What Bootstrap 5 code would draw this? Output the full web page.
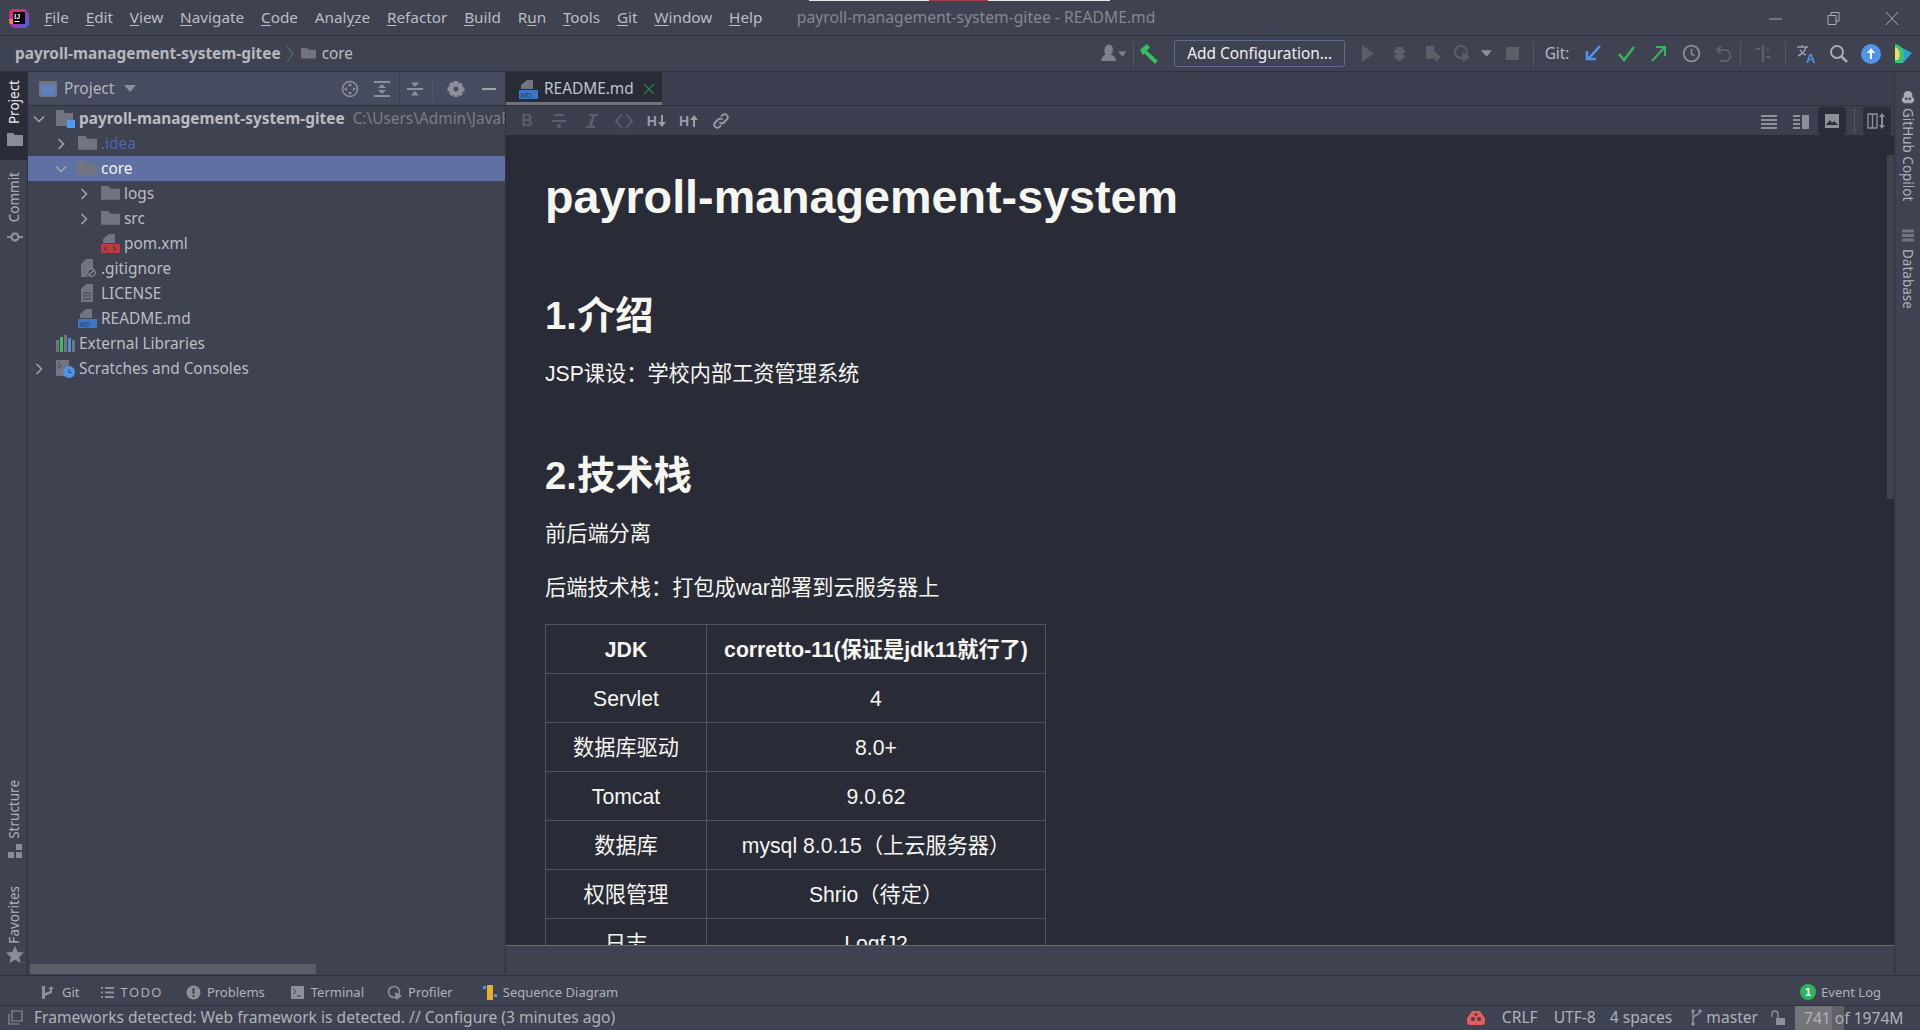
<!DOCTYPE html>
<html lang="en">
<head>
  <meta charset="UTF-8" />
  <title>payroll-management-system-gitee - README.md</title>
  <link href="https://cdn.jsdelivr.net/npm/bootstrap@5.3.2/dist/css/bootstrap.min.css" rel="stylesheet" />
  <style>
    html, body { height: 100%; }
    body {
      background-color: #3f4251;
      color: #bbbdc3;
      font-family: "Noto Sans", "Noto Sans CJK SC", sans-serif;
      font-size: 15.4px;
      line-height: 1;
      overflow: hidden;
    }
    .ide { height: 1030px; width: 1920px; position: relative; }
    .top-strip { position: absolute; left: 809px; top: 0; width: 301px; height: 1px; background: #e8e8e8; }
    .top-strip i { position: absolute; left: 120px; width: 59px; height: 1px; background: #a03c48; }

    .title-bar { height: 36px; border-bottom: 1px solid #2f313c; padding-left: 9px; }
    .app-logo { width: 20px; height: 20px; margin-right: 7px; }
    .menu-entry { padding: 0 8.400px; color: #bbbdc3; white-space: nowrap; font-size: 15.3px; }
    .menu-entry u { text-underline-offset: 2px; }
    .win-title { margin-left: 26px; color: #85888f; font-size: 15.7px; }
    .win-btn { width: 16px; height: 16px; }
    .win-btns { margin-left: auto; gap: 42px; padding-right: 20px; }

    .nav-bar { height: 36px; border-bottom: 1px solid #2f313c; padding-left: 15px; }
    .crumb-root { font-weight: 700; color: #b6b8bd; }
    .crumb-sep { width: 8px; height: 16px; margin: 0 6px 0 5px; }
    .crumb-dir { width: 17px; height: 15px; margin-right: 5px; }
    .tool-wrap { margin-left: auto; }
    .tool-box { width: 32.5px; height: 24px; display: flex; align-items: center; justify-content: center; flex: none; }
    .tool-box svg { width: 19px; height: 19px; }
    .tool-sep { width: 1px; height: 24px; background: #545764; flex: none; }
    .config-btn {
      width: 171px; height: 27px; margin: 0 13px 0 8px; flex: none;
      border: 1px solid #5f6a96; border-radius: 3px; background: #3f4251;
      color: #f0f0f0; text-align: center; line-height: 26px; white-space: nowrap;
    }
    .git-label { color: #b6b8bd; padding: 0 8px 0 11px; }

    .main-area { height: 904px; border-bottom: 1px solid #2f313c; }
    .side-left { width: 28px; border-right: 1px solid #2f313c; flex: none; }
    .side-right { width: 26px; border-left: 1px solid #2f313c; flex: none; padding-top: 18px; }
    .side-item { display: flex; flex-direction: column; align-items: center; font-size: 13.5px; color: #b0b2b9; }
    .side-left .side-item { padding-left: 2px; }
    .side-item.on { height: 88px; background: #2a2c37; color: #eee; padding-top: 8px; }
    .v-up { writing-mode: vertical-rl; transform: rotate(180deg); white-space: nowrap; }
    .v-down { writing-mode: vertical-rl; white-space: nowrap; }
    .side-item svg { width: 16px; height: 14px; flex: none; }
    .side-item .struct-ic { margin-top: 6px; }
    .side-item .fav-ic { width: 18px; height: 17px; margin-top: 2px; }

    .proj-panel { width: 478px; flex: none; border-right: 1px solid #2f313c; position: relative; }
    .proj-head { height: 34px; background: #474b60; border-bottom: 1px solid #2f313c; padding-left: 11px; }
    .proj-head .head-ic { width: 18px; height: 16px; }
    .proj-title { color: #b4b6bd; margin-left: 7px; }
    .drop-arrow { width: 12px; height: 7px; margin-left: 10px; }
    .head-tools { margin-left: auto; }
    .head-tool { width: 32.5px; height: 33px; display: flex; align-items: center; justify-content: center; }
    .head-tool svg { width: 18px; height: 18px; }
    .head-line { border-left: 1px solid #3c3f50; }
    .head-sep { width: 1px; height: 24px; background: #555869; margin: 0 7px 0 1px; }

    .tree-row { height: 25px; display: flex; align-items: center; white-space: nowrap; overflow: hidden; }
    .tree-row.sel { background: #5f71a3; color: #f2f2f2; }
    .d0 { padding-left: 2px; }
    .d1 { padding-left: 24px; }
    .d2 { padding-left: 47px; }
    .chev { width: 26px; flex: none; display: flex; padding-left: 3px; }
    .chev svg { width: 12px; height: 12px; }
    .row-ic { width: 19px; height: 19px; margin-right: 4px; flex: none; }
    .tree-row .bold { font-weight: 700; color: #bbbdc3; }
    .tree-row .path { color: #7b7e88; margin-left: 8px; }
    .tree-row .ign { color: #4f68a8; }
    .h-scroll { position: absolute; left: 2px; bottom: 1px; width: 286px; height: 10px; background: #5c5f69; }

    .editor-col { min-width: 0; }
    .tab-bar { height: 34px; border-bottom: 1px solid #2f313c; background: #3c3f4f; }
    .file-tab { width: 156px; height: 33px; background: #292b37; border-bottom: 3px solid #70737c; padding: 4px 0 0 13px; color: #bfc6cf; }
    .file-tab svg.md-ic { width: 19px; height: 19px; margin-right: 6px; }
    .file-tab svg.x-ic { width: 10px; height: 10px; margin-left: 10px; }
    .md-tools { height: 30px; background: #3c3f4f; padding: 0 3px 0 5px; }
    .md-btn { width: 32.3px; height: 28px; display: flex; align-items: center; justify-content: center; flex: none; }
    .md-btn svg { width: 18px; height: 18px; }
    .md-btn b { font-family: "Liberation Sans", sans-serif; font-size: 14px; color: #9a9da6; }
    .md-btn svg.h-arrow { width: 8px; height: 12px; margin-left: 1px; }
    .md-btn.act { background: #2b2d38; border-radius: 4px; width: 28px; }
    .md-right { margin-left: auto; }

    .md-pane {
      background: #292b37; color: #f6f6f0; overflow: hidden; position: relative;
      padding: 0 0 0 39px;
      font-family: "Liberation Sans", "Noto Sans CJK SC", sans-serif;
      font-size: 21.2px; line-height: 33px;
    }
    .md-pane h1 { font-size: 46.7px; font-weight: 700; line-height: 56px; margin: 34px 0 0; }
    .md-pane h2 { font-size: 38.3px; font-weight: 700; line-height: 46px; margin: 0; }
    .md-pane p { margin: 0 0 21px; }
    .h-intro { padding-top: 68px; padding-bottom: 18px; }
    .h-stack { padding-top: 42px; padding-bottom: 18px; }
    .md-tbl { border-collapse: collapse; width: 501px; margin-top: -1px; table-layout: fixed; }
    .md-tbl th, .md-tbl td { border: 1px solid #50525f; text-align: center; height: 49px; padding: 0; white-space: nowrap; }
    .md-tbl th:first-child, .md-tbl td:first-child { width: 161px; }
    .v-scroll { position: absolute; right: 0; top: 20px; width: 7px; height: 344px; background: #3f4251; }
    .editor-foot { height: 30px; border-top: 1px solid #66688c; flex: none; }

    .tool-win { height: 30px; border-bottom: 1px solid #2f313c; font-size: 13px; color: #b0b2b9; padding: 3px 39px 0 41px; }
    .tw-item { display: flex; align-items: center; white-space: nowrap; }
    .tw-item svg { width: 15px; height: 15px; margin-right: 6px; flex: none; }
    .tw-caps { letter-spacing: 1.4px; }
    .status-bar { height: 24px; font-size: 15.6px; color: #b0b2b9; padding: 0 0 1px 8px; }
    .status-bar .st-ic { width: 15px; height: 15px; flex: none; }
    .status-msg { margin-left: 11px; white-space: nowrap; }
    .st-right { margin-left: auto; }
    .mem-box { width: 125px; height: 24px; line-height: 24px; padding-left: 9px; white-space: nowrap; margin-bottom: -1px; background: linear-gradient(90deg, #747578 0, #747578 37px, #5f6068 37px, #5f6068 49px, transparent 49px); }
  </style>
</head>
<body>

<svg width="0" height="0" class="position-absolute">
  <symbol id="i-folder" viewBox="0 0 18 18"><path fill="#72757f" d="M0 2h7l2 2.500h9V15H0z"/></symbol>
  <symbol id="i-down" viewBox="0 0 12 12"><path fill="none" stroke="#a7a9b0" stroke-width="1.400" d="M1 3.500l5 5 5-5"/></symbol>
  <symbol id="i-right" viewBox="0 0 12 12"><path fill="none" stroke="#a7a9b0" stroke-width="1.400" d="M3.500 1l5 5-5 5"/></symbol>
  <symbol id="i-tri" viewBox="0 0 12 7"><path fill="#8d9099" d="M0 0h12L6 7z"/></symbol>
  <symbol id="i-sheet" viewBox="0 0 18 18"><path fill="#72757f" d="M8 0h6v9H2V5z"/></symbol>
</svg>

<div class="ide d-flex flex-column">
  <div class="top-strip"><i></i></div>

  <!-- title bar -->
  <div class="title-bar d-flex align-items-center flex-none">
    <svg class="app-logo" viewBox="0 0 20 20">
      <defs><linearGradient id="lg" x1="0" y1="0" x2="1" y2="1"><stop offset="0" stop-color="#e8314f"/><stop offset=".5" stop-color="#b52fb0"/><stop offset="1" stop-color="#2f6fe0"/></linearGradient></defs>
      <path fill="url(#lg)" d="M3 1h13l4 5v11l-3 3H4l-4-5V4z"/>
      <path fill="#f58a1f" d="M0 11h4v5H1z"/>
      <rect x="4" y="4" width="12" height="12" fill="#000"/>
      <text x="5.2" y="10.8" font-size="7" font-weight="700" fill="#fff" font-family="Liberation Sans">IJ</text>
      <rect x="5.500" y="13" width="5" height="1" fill="#fff"/>
    </svg>
    <span class="menu-entry"><u>F</u>ile</span>
    <span class="menu-entry"><u>E</u>dit</span>
    <span class="menu-entry"><u>V</u>iew</span>
    <span class="menu-entry"><u>N</u>avigate</span>
    <span class="menu-entry"><u>C</u>ode</span>
    <span class="menu-entry">Anal<u>y</u>ze</span>
    <span class="menu-entry"><u>R</u>efactor</span>
    <span class="menu-entry"><u>B</u>uild</span>
    <span class="menu-entry">R<u>u</u>n</span>
    <span class="menu-entry"><u>T</u>ools</span>
    <span class="menu-entry"><u>G</u>it</span>
    <span class="menu-entry"><u>W</u>indow</span>
    <span class="menu-entry"><u>H</u>elp</span>
    <span class="win-title">payroll-management-system-gitee - README.md</span>
    <div class="win-btns d-flex align-items-center">
      <svg class="win-btn" viewBox="0 0 16 16"><path stroke="#a9abb1" d="M1 9h13"/></svg>
      <svg class="win-btn" viewBox="0 0 16 16"><path fill="none" stroke="#a9abb1" d="M2 5.500h8v9H2zM5 5V2.500h8V11h-3"/></svg>
      <svg class="win-btn" viewBox="0 0 16 16"><path stroke="#a9abb1" d="M2 2l12 13M14 2L2 15"/></svg>
    </div>
  </div>

  <!-- navigation bar -->
  <div class="nav-bar d-flex align-items-center flex-none">
    <span class="crumb-root">payroll-management-system-gitee</span>
    <svg class="crumb-sep" viewBox="0 0 8 16"><path fill="none" stroke="#3f8f5a" d="M1 0l6 8-6 8"/></svg>
    <svg class="crumb-dir"><use href="#i-folder"/></svg>
    <span>core</span>
    <div class="tool-wrap d-flex align-items-center">
      <div class="tool-box" style="width:36px"><svg viewBox="0 0 26 18" style="width:30px"><path fill="#7e818a" d="M6 1c3-1 5 1 5 4s-1 4-2 5c2 1 5 2 5 6H0c0-4 3-5 4-6-2-3-1-8 2-9z"/><path fill="#7e818a" d="M16 7h8l-4 5z"/></svg></div>
      <div class="tool-sep"></div>
      <div class="tool-box"><svg viewBox="0 0 19 19" style="width:21px;height:21px"><path fill="#36c060" d="M1 6l6-5 3 3-3 3 10 9-2.500 3L5 9.500 3.500 11z"/></svg></div>
      <div class="config-btn">Add Configuration...</div>
      <div class="tool-box" style="margin-left:-7px"><svg viewBox="0 0 19 19"><path fill="#5c5e68" d="M4 1l12 8.500L4 18z"/></svg></div>
      <div class="tool-box"><svg viewBox="0 0 19 19"><path fill="#5c5e68" d="M6 3h7v3h2v3h-2v2h2v3h-2l-2 3H8l-2-3H4v-3h2V9H4V6h2z"/></svg></div>
      <div class="tool-box"><svg viewBox="0 0 19 19"><path fill="#5c5e68" d="M3 2h8v5l7 6-6 5v-5l-3 2H3z"/></svg></div>
      <div class="tool-box" style="width:28px"><svg viewBox="0 0 19 19"><circle cx="8" cy="8" r="6" fill="none" stroke="#5c5e68" stroke-width="2"/><path fill="#5c5e68" d="M9 8l8 5-7 5z"/></svg></div>
      <svg width="11" height="7" style="margin:0 8px 0 4px"><use href="#i-tri"/></svg>
      <div class="tool-box" style="width:26px"><svg viewBox="0 0 19 19"><rect x="3" y="3" width="13" height="13" fill="#5c5e68"/></svg></div>
      <div class="tool-sep" style="margin-left:7px"></div>
      <span class="git-label">Git:</span>
      <div class="tool-box"><svg viewBox="0 0 19 19"><path fill="none" stroke="#4f94e8" stroke-width="2.500" d="M16 2L5 14M3 7v8h9"/></svg></div>
      <div class="tool-box"><svg viewBox="0 0 19 19"><path fill="none" stroke="#36b55f" stroke-width="2.500" d="M2 10l5 6L17 3"/></svg></div>
      <div class="tool-box"><svg viewBox="0 0 19 19"><path fill="none" stroke="#36b55f" stroke-width="2" d="M3 17L15 4M7 3h9v9"/></svg></div>
      <div class="tool-box"><svg viewBox="0 0 19 19"><circle cx="9.500" cy="9.500" r="7.800" fill="none" stroke="#8d9099" stroke-width="1.800"/><path fill="none" stroke="#8d9099" stroke-width="1.500" d="M9.500 5v5l3 2"/></svg></div>
      <div class="tool-box"><svg viewBox="0 0 19 19"><path fill="none" stroke="#5c5e68" stroke-width="2" d="M7 2L3 6l4 4M3 6h8a5 5 0 0 1 0 11H6"/></svg></div>
      <div class="tool-sep"></div>
      <div class="tool-box" style="width:44px"><svg viewBox="0 0 19 19"><path fill="none" stroke="#5c5e68" stroke-width="2.500" d="M9 1v17"/><path fill="#5c5e68" d="M2 4h4v2H2zM12 12h5v2h-5zM13 3l3 4-3 0z"/></svg></div>
      <div class="tool-sep"></div>
      <div class="tool-box" style="margin-left:4px"><svg viewBox="0 0 21 21" style="width:21px;height:21px"><path fill="none" stroke="#9a9da5" stroke-width="1.400" d="M1 4h11M6 2v2M10 4c-1 4-4 7-8 9M4 7c1 2 3 4 6 5"/><text x="10" y="20" font-size="13" font-weight="700" fill="#4f94e8" font-family="Liberation Sans">A</text></svg></div>
      <div class="tool-box"><svg viewBox="0 0 19 19"><circle cx="8" cy="8" r="6" fill="none" stroke="#a9abb1" stroke-width="2"/><path stroke="#a9abb1" stroke-width="2.500" d="M12 12l6 6"/></svg></div>
      <div class="tool-box"><svg viewBox="0 0 20 20" style="width:20px;height:20px"><circle cx="10" cy="10" r="10" fill="#4f94e8"/><path fill="#fff" d="M10 4l4 5h-3v6H9V9H6z"/></svg></div>
      <div class="tool-box"><svg viewBox="0 0 19 19"><path fill="#2f9fd8" d="M1 0l17 9-9 10H1z"/><path fill="#3dc46f" d="M1 0c9 2 11 10 7 19H1z"/><path fill="#e4e06a" d="M1 3c5 2 6 8 3 13H1z"/></svg></div>
    </div>
  </div>

  <!-- main area -->
  <div class="main-area d-flex flex-none">
    <div class="side-left d-flex flex-column">
      <div class="side-item on">
        <span class="v-up">Project</span>
        <svg viewBox="0 0 16 14" class="mt-2"><path fill="#8a8d96" d="M0 1h6l2 2h8v11H0z"/></svg>
      </div>
      <div class="side-item" style="margin-top:12px">
        <span class="v-up">Commit</span>
        <svg viewBox="0 0 16 14" class="mt-2"><circle cx="8" cy="7" r="3.500" fill="none" stroke="#8a8d96" stroke-width="2.500"/><path stroke="#8a8d96" stroke-width="2" d="M0 7h4M12 7h4"/></svg>
      </div>
      <div class="side-item mt-auto">
        <span class="v-up">Structure</span>
        <svg viewBox="0 0 16 14" class="struct-ic"><path fill="#8a8d96" d="M9 0h6v6H9zM1 8h6v6H1zM9 8h6v6H9z"/></svg>
      </div>
      <div class="side-item" style="margin-top:28px;padding-bottom:12px">
        <span class="v-up">Favorites</span>
        <svg viewBox="0 0 18 17" class="fav-ic"><path fill="#8a8d96" d="M9 0l2.700 6 6.300.600-4.800 4.300 1.400 6.100L9 13.800 3.400 17l1.400-6.100L0 6.600 6.300 6z"/></svg>
      </div>
    </div>

    <div class="proj-panel">
      <div class="proj-head d-flex align-items-center">
        <svg class="head-ic" viewBox="0 0 18 16"><rect width="18" height="16" rx="1" fill="#72757f"/><rect x="2" y="4" width="14" height="10" fill="#5b82bd"/></svg>
        <span class="proj-title">Project</span>
        <svg class="drop-arrow"><use href="#i-tri"/></svg>
        <div class="head-tools d-flex align-items-center">
          <div class="head-tool"><svg viewBox="0 0 18 18"><circle cx="9" cy="9" r="7.500" fill="none" stroke="#8d9099" stroke-width="1.600"/><path fill="#8d9099" d="M9 3l2 3H7zM9 15l2-3H7zM3 9l3 2V7zM15 9l-3 2V7z"/></svg></div>
          <div class="head-tool"><svg viewBox="0 0 18 18"><path fill="#8d9099" d="M1 1h16v2H1zM1 15h16v2H1zM9 4l4 4H5zM9 14l4-4H5z"/></svg></div>
          <div class="head-tool head-line"><svg viewBox="0 0 18 18"><path fill="#8d9099" d="M1 8h16v2H1zM9 7l4-4.500H5zM9 11l4 4.500H5z"/></svg></div>
          <div class="head-sep"></div>
          <div class="head-tool"><svg viewBox="0 0 18 18"><path fill="#8d9099" fill-rule="evenodd" d="M7 1h4l.5 2.500 2-1 2.500 2.500-1 2 2.500.5v4l-2.500.5 1 2L13.500 16l-2-1L11 17H7l-.5-2-2 1L2 13.500l1-2L.5 11V7L3 6.500l-1-2L4.500 2l2 1zM9 6.500a2.500 2.500 0 1 0 0 5 2.500 2.500 0 0 0 0-5z"/></svg></div>
          <div class="head-tool"><svg viewBox="0 0 18 18"><rect x="2" y="8" width="14" height="2" fill="#a0a2aa"/></svg></div>
        </div>
      </div>

      <div class="tree-row d0">
        <span class="chev"><svg><use href="#i-down"/></svg></span>
        <svg class="row-ic" viewBox="0 0 19 19"><path fill="#72757f" d="M0 1h7l2 3h8v13H0z"/><rect x="11" y="11" width="8" height="8" fill="#4f9cf0"/></svg>
        <span class="bold">payroll-management-system-gitee</span><span class="path">C:\Users\Admin\JavaProjects\payroll</span>
      </div>
      <div class="tree-row d1"><span class="chev"><svg><use href="#i-right"/></svg></span><svg class="row-ic"><use href="#i-folder"/></svg><span class="ign">.idea</span></div>
      <div class="tree-row d1 sel"><span class="chev"><svg><use href="#i-down"/></svg></span><svg class="row-ic"><use href="#i-folder"/></svg><span>core</span></div>
      <div class="tree-row d2"><span class="chev"><svg><use href="#i-right"/></svg></span><svg class="row-ic"><use href="#i-folder"/></svg><span>logs</span></div>
      <div class="tree-row d2"><span class="chev"><svg><use href="#i-right"/></svg></span><svg class="row-ic"><use href="#i-folder"/></svg><span>src</span></div>
      <div class="tree-row d2"><span class="chev"></span>
        <svg class="row-ic" viewBox="0 0 19 19"><use href="#i-sheet" width="18" height="18"/><rect y="10" width="19" height="9" fill="#c0393f"/><path fill="none" stroke="#3f4251" stroke-width="1.200" d="M6 12l-2.500 2.500L6 17M12 12l2.500 2.500L12 17"/></svg>
        <span>pom.xml</span></div>
      <div class="tree-row d1"><span class="chev"></span>
        <svg class="row-ic" viewBox="0 0 19 19"><path fill="#72757f" d="M8 0h7v10a5 5 0 0 0-5 8H3V5z"/><circle cx="13.500" cy="13.500" r="3.800" fill="none" stroke="#8d9099" stroke-width="1.200"/><path stroke="#8d9099" stroke-width="1.200" d="M11 16l5-5"/></svg>
        <span>.gitignore</span></div>
      <div class="tree-row d1"><span class="chev"></span>
        <svg class="row-ic" viewBox="0 0 19 19"><path fill="#72757f" d="M8 0h7v18H3V5z"/><path stroke="#3f4251" d="M5 9h8M5 12h8M5 15h8"/></svg>
        <span>LICENSE</span></div>
      <div class="tree-row d1"><span class="chev"></span>
        <svg class="row-ic" viewBox="0 0 19 19"><use href="#i-sheet" width="18" height="18"/><rect y="10" width="19" height="9" fill="#3f76c0"/><text x="1.500" y="17.500" font-size="7" font-weight="700" fill="#2b4f86" font-family="Liberation Sans">MD</text></svg>
        <span>README.md</span></div>
      <div class="tree-row d0"><span class="chev"></span>
        <svg class="row-ic" viewBox="0 0 19 19"><rect x="0" y="6" width="3" height="12" fill="#72757f"/><rect x="4" y="3" width="3" height="15" fill="#3dbb62"/><rect x="8" y="1" width="3" height="17" fill="#72757f"/><rect x="12" y="4" width="3" height="14" fill="#4f8fd8"/><rect x="16" y="6" width="3" height="12" fill="#72757f"/></svg>
        <span>External Libraries</span></div>
      <div class="tree-row d0"><span class="chev"><svg><use href="#i-right"/></svg></span>
        <svg class="row-ic" viewBox="0 0 19 19"><path fill="#72757f" d="M0 1h13v8a6 6 0 0 0-4 8H0z"/><path fill="none" stroke="#3f4251" d="M2 4l3 2.500L2 9"/><circle cx="13" cy="13" r="6" fill="#4f94e8"/><path fill="none" stroke="#3f4251" d="M13 10v3.500h2.500"/></svg>
        <span>Scratches and Consoles</span></div>

      <div class="h-scroll"></div>
    </div>

    <div class="editor-col d-flex flex-column flex-grow-1">
      <div class="tab-bar flex-none">
        <div class="file-tab d-flex align-items-center">
          <svg class="md-ic" viewBox="0 0 19 19"><use href="#i-sheet" width="18" height="18"/><rect y="10" width="19" height="9" fill="#3f76c0"/><text x="1.500" y="17.500" font-size="7" font-weight="700" fill="#2b4f86" font-family="Liberation Sans">MD</text></svg>
          <span>README.md</span>
          <svg class="x-ic" viewBox="0 0 10 10"><path stroke="#2f8a50" stroke-width="1.200" d="M0 0l10 10M10 0L0 10"/></svg>
        </div>
      </div>
      <div class="md-tools d-flex align-items-center flex-none">
        <div class="md-btn"><b style="color:#5c5e68;font-size:16px">B</b></div>
        <div class="md-btn"><svg viewBox="0 0 18 18"><path fill="#5c5e68" d="M2 8h14v2H2zM4 2h10v2H4zM7.500 12h3v4h-3z"/></svg></div>
        <div class="md-btn"><svg viewBox="0 0 18 18"><path fill="#5c5e68" d="M6 2h9v2h-3L9 14h3v2H3v-2h3L9 4H6z"/></svg></div>
        <div class="md-btn"><svg viewBox="0 0 18 18"><path fill="none" stroke="#5c5e68" stroke-width="1.800" d="M7 2L1 9l6 7M11 2l6 7-6 7"/></svg></div>
        <div class="md-btn"><b>H</b><svg class="h-arrow" viewBox="0 0 8 12"><path fill="#9a9da6" d="M3 0h2v7h3l-4 5-4-5h3z"/></svg></div>
        <div class="md-btn"><b>H</b><svg class="h-arrow" viewBox="0 0 8 12"><path fill="#9a9da6" d="M3 12h2V5h3L4 0 0 5h3z"/></svg></div>
        <div class="md-btn"><svg viewBox="0 0 18 18"><path fill="none" stroke="#9a9da6" stroke-width="1.800" d="M7.500 10.500a3 3 0 0 0 4.300 0l3-3a3 3 0 0 0-4.300-4.300L9 4.700M10.500 7.500a3 3 0 0 0-4.300 0l-3 3a3 3 0 0 0 4.300 4.300L9 13.300"/></svg></div>
        <div class="md-right d-flex align-items-center">
          <div class="md-btn"><svg viewBox="0 0 18 18"><path fill="#8d9099" d="M1 3h16v2H1zM1 7h16v2H1zM1 11h16v2H1zM1 15h16v2H1z"/></svg></div>
          <div class="md-btn" style="margin-right:1px"><svg viewBox="0 0 18 18"><path fill="#8d9099" d="M1 3h7v2H1zM1 7h7v2H1zM1 11h7v2H1zM1 15h7v2H1zM10 3h7v14h-7z"/></svg></div>
          <div class="md-btn act"><svg viewBox="0 0 18 18"><rect x="2" y="2" width="14" height="14" fill="#8d9099"/><path fill="#2b2d38" d="M3 13l4-5 2 3 2-2 4 4z"/></svg></div>
          <div class="tool-sep" style="margin:0 8px"></div>
          <div class="md-btn act"><svg viewBox="0 0 20 18" style="width:20px"><path fill="none" stroke="#8d9099" stroke-width="1.400" d="M1 2h9v14H1zM5.500 2v14"/><path fill="#8d9099" d="M15 1l3 4h-2v8h2l-3 4-3-4h2V5h-2z"/></svg></div>
        </div>
      </div>
      <div class="md-pane flex-grow-1">
        <h1>payroll-management-system</h1>
        <h2 class="h-intro">1.介绍</h2>
        <p>JSP课设：学校内部工资管理系统</p>
        <h2 class="h-stack">2.技术栈</h2>
        <p>前后端分离</p>
        <p>后端技术栈：打包成war部署到云服务器上</p>
        <table class="md-tbl">
          <thead><tr><th>JDK</th><th>corretto-11(保证是jdk11就行了)</th></tr></thead>
          <tbody>
            <tr><td>Servlet</td><td>4</td></tr>
            <tr><td>数据库驱动</td><td>8.0+</td></tr>
            <tr><td>Tomcat</td><td>9.0.62</td></tr>
            <tr><td>数据库</td><td>mysql 8.0.15（上云服务器）</td></tr>
            <tr><td>权限管理</td><td>Shrio（待定）</td></tr>
            <tr><td>日志</td><td>LogfJ2</td></tr>
          </tbody>
        </table>
        <div class="v-scroll"></div>
      </div>
      <div class="editor-foot"></div>
    </div>

    <div class="side-right d-flex flex-column align-items-center">
      <div class="side-item">
        <svg viewBox="0 0 16 16"><path fill="#a9abb1" d="M8 1c3 0 5 2 5 5v2l2 2v3l-3 2H4l-3-2v-3l2-2V6c0-3 2-5 5-5z"/><circle cx="6" cy="10" r="1.500" fill="#3f4251"/><circle cx="10" cy="10" r="1.500" fill="#3f4251"/></svg>
        <span class="v-down mt-1">GitHub Copilot</span>
      </div>
      <div class="side-item" style="margin-top:27px">
        <svg viewBox="0 0 16 14" style="height:15px"><path fill="#72757f" d="M2 1h12v3H2zM2 5.500h12v3H2zM2 10h12v3H2z"/></svg>
        <span class="v-down" style="margin-top:6px">Database</span>
      </div>
    </div>
  </div>

  <!-- tool window bar -->
  <div class="tool-win d-flex align-items-center flex-none">
    <div class="tw-item" style="margin-right:20px"><svg viewBox="0 0 15 15"><path fill="#8d9099" d="M1 1h3v13H1zM4 8l5-2V4H7l3-3 3 3h-2v4L4 11z"/></svg>Git</div>
    <div class="tw-item" style="margin-right:23px"><svg viewBox="0 0 15 15"><path fill="#8d9099" d="M1 2h2v2H1zM5 2h9v2H5zM1 6.500h2v2H1zM5 6.500h9v2H5zM1 11h2v2H1zM5 11h9v2H5z"/></svg><span class="tw-caps">TODO</span></div>
    <div class="tw-item" style="margin-right:25px"><svg viewBox="0 0 15 15"><circle cx="7.500" cy="7.500" r="7" fill="#8d9099"/><rect x="6.500" y="3" width="2" height="6" fill="#3f4251"/><rect x="6.500" y="10" width="2" height="2" fill="#3f4251"/></svg>Problems</div>
    <div class="tw-item" style="margin-right:23px"><svg viewBox="0 0 15 15"><rect x="1" y="1" width="13" height="13" fill="#8d9099"/><path fill="none" stroke="#3f4251" d="M3 4l3 2.500L3 9M7 11h4"/></svg>Terminal</div>
    <div class="tw-item" style="margin-right:29px"><svg viewBox="0 0 15 15"><circle cx="7" cy="7" r="5.500" fill="none" stroke="#8d9099" stroke-width="1.600"/><path fill="#8d9099" d="M8 7l7 4-6 4z"/></svg>Profiler</div>
    <div class="tw-item"><svg viewBox="0 0 15 15"><rect x="5" y="0" width="6" height="15" fill="#e8b125"/><rect x="1" y="1" width="3" height="3" fill="#4f94e8"/><rect x="12" y="9" width="3" height="3" fill="#4f94e8"/></svg>Sequence Diagram</div>
    <div class="tw-item ms-auto"><svg viewBox="0 0 16 16" style="width:16px;height:16px;margin-right:5px"><circle cx="8" cy="8" r="8" fill="#2fb35f"/><text x="8" y="12" text-anchor="middle" font-size="11" font-weight="700" fill="#fff" font-family="Liberation Sans">1</text></svg>Event Log</div>
  </div>

  <!-- status bar -->
  <div class="status-bar d-flex align-items-center flex-none">
    <svg class="st-ic" viewBox="0 0 15 15"><path fill="none" stroke="#8d9099" stroke-width="1.200" d="M4 1h10v10H4zM1 4v10h10"/></svg>
    <span class="status-msg">Frameworks detected: Web framework is detected. // Configure (3 minutes ago)</span>
    <div class="st-right d-flex align-items-center">
      <svg viewBox="0 0 18 15" style="width:18px;height:15px;margin-right:17px"><path fill="#e25c5c" d="M5 1h8l2 3 3 4v5l-2 2H2l-2-2V8l3-4z"/><circle cx="6" cy="9" r="2" fill="#3f4251"/><circle cx="12" cy="9" r="2" fill="#3f4251"/><circle cx="9" cy="4.500" r="1.500" fill="#3f4251"/></svg>
      <span style="margin-right:16px">CRLF</span>
      <span style="margin-right:14px">UTF-8</span>
      <span style="margin-right:18px">4 spaces</span>
      <svg viewBox="0 0 12 17" style="width:12px;height:17px;margin-right:4px"><path fill="none" stroke="#8d9099" stroke-width="1.500" d="M3 2v13M10 2c0 5-7 3-7 8"/><circle cx="3" cy="2" r="1.800" fill="#8d9099"/><circle cx="10" cy="2" r="1.800" fill="#8d9099"/><circle cx="3" cy="15" r="1.800" fill="#8d9099"/></svg>
      <span style="margin-right:13px">master</span>
      <svg viewBox="0 0 14 15" style="width:14px;height:15px;margin-right:10px"><rect x="5" y="8" width="9" height="7" fill="#8d9099"/><path fill="none" stroke="#8d9099" stroke-width="1.400" d="M1 7V4a3 3 0 0 1 6 0v4"/></svg>
      <div class="mem-box">741 of 1974M</div>
    </div>
  </div>
</div>

<script src="https://cdn.jsdelivr.net/npm/bootstrap@5.3.2/dist/js/bootstrap.bundle.min.js"></script>
</body>
</html>
